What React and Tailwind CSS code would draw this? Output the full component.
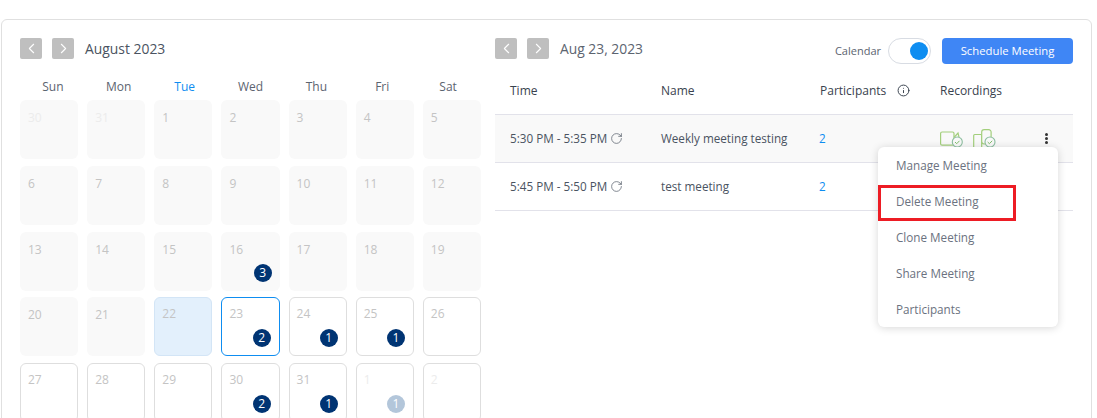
import { ChevronLeft, ChevronRight, Info, RotateCw } from "lucide-react";

const WEEK_DAYS = ["Sun", "Mon", "Tue", "Wed", "Thu", "Fri", "Sat"];

// kind: past = grey tile, today = blue tile, selected / open = outlined tile
const CELLS = [
  { day: 30, kind: "past", faded: true },
  { day: 31, kind: "past", faded: true },
  { day: 1, kind: "past" },
  { day: 2, kind: "past" },
  { day: 3, kind: "past" },
  { day: 4, kind: "past" },
  { day: 5, kind: "past" },
  { day: 6, kind: "past" },
  { day: 7, kind: "past" },
  { day: 8, kind: "past" },
  { day: 9, kind: "past" },
  { day: 10, kind: "past" },
  { day: 11, kind: "past" },
  { day: 12, kind: "past" },
  { day: 13, kind: "past" },
  { day: 14, kind: "past" },
  { day: 15, kind: "past" },
  { day: 16, kind: "past", count: 3 },
  { day: 17, kind: "past" },
  { day: 18, kind: "past" },
  { day: 19, kind: "past" },
  { day: 20, kind: "past" },
  { day: 21, kind: "past" },
  { day: 22, kind: "today" },
  { day: 23, kind: "selected", count: 2 },
  { day: 24, kind: "open", count: 1 },
  { day: 25, kind: "open", count: 1 },
  { day: 26, kind: "open" },
  { day: 27, kind: "open" },
  { day: 28, kind: "open" },
  { day: 29, kind: "open" },
  { day: 30, kind: "open", count: 2 },
  { day: 31, kind: "open", count: 1 },
  { day: 1, kind: "open", faded: true, count: 1 },
  { day: 2, kind: "open", faded: true },
];

const MEETINGS = [
  { time: "5:30 PM - 5:35 PM", name: "Weekly meeting testing", count: 2, active: true },
  { time: "5:45 PM - 5:50 PM", name: "test meeting", count: 2 },
];

const MENU_ITEMS = [
  "Manage Meeting",
  "Delete Meeting",
  "Clone Meeting",
  "Share Meeting",
  "Participants",
];

const NavButtons = () => (
  <div className="flex gap-[10px]">
    <button className="flex items-center justify-center w-[22px] h-[21px] rounded-[2px] bg-[#bfbfbf] text-white">
      <ChevronLeft size={17} strokeWidth={1.5} />
    </button>
    <button className="flex items-center justify-center w-[22px] h-[21px] rounded-[2px] bg-[#bfbfbf] text-white">
      <ChevronRight size={17} strokeWidth={1.5} />
    </button>
  </div>
);

const DayCell = ({ day, kind, faded, count }) => {
  const tile = {
    past: "bg-[#f9f9f9] pl-[8px] pt-[9px]",
    today: "bg-[#e3f0fc] border border-[#d3e5f6] pl-[7px] pt-[7px]",
    selected: "bg-white border border-[#0e8df1] pl-[7px] pt-[7px]",
    open: "bg-white border border-[#dedede] pl-[7px] pt-[7px]",
  }[kind];
  const badgeBottom = kind === "past" ? "bottom-[9px]" : "bottom-[8px]";

  return (
    <div className={`relative h-[59px] rounded-[6px] text-xs leading-[18px] ${tile} ${faded ? "text-[#ececec]" : "text-[#c4c4c4]"}`}>
      {day}
      {count && (
        <span className={`absolute right-[8px] ${badgeBottom} flex items-center justify-center w-[18px] h-[18px] rounded-full text-xs text-white ${faded ? "bg-[#b3c6da]" : "bg-[#003473]"}`}>
          {count}
        </span>
      )}
    </div>
  );
};

const CameraCheck = () => (
  <svg width="23" height="20" viewBox="0 0 23 20" fill="none">
    <rect x="0.6" y="3" width="13.4" height="13.2" rx="1.5" stroke="#a3cf7c" strokeWidth="1.2" />
    <path d="M14 8.5l4-4.5 1.2 5" stroke="#a3cf7c" strokeWidth="1.2" />
    <circle cx="17.3" cy="13" r="5" fill="#f9f9f9" stroke="#8dbfa0" strokeWidth="1.1" />
    <path d="M15 13l1.7 1.7 2.8-2.9" stroke="#7fbf6a" strokeWidth="1" />
  </svg>
);

const PhoneCheck = () => (
  <svg width="23" height="20" viewBox="0 0 23 20" fill="none">
    <rect x="0.7" y="5.5" width="8" height="14" rx="1" stroke="#a3cf7c" strokeWidth="1.2" />
    <path d="M8.7 3a2.4 2.4 0 012.4-2.4h4.6a2.4 2.4 0 012.4 2.4v7l-6 5H11a2.4 2.4 0 01-2.3-2.4z" fill="#f9f9f9" stroke="#a3cf7c" strokeWidth="1.2" />
    <circle cx="17" cy="13" r="5" fill="#f9f9f9" stroke="#8dbfa0" strokeWidth="1.1" />
    <path d="M14.7 13l1.7 1.7 2.8-2.9" stroke="#7fbf6a" strokeWidth="1" />
  </svg>
);

const App = () => {
  return (
    <div className="h-[418px] w-[1097px] overflow-hidden bg-white pt-[19px] pl-px font-['Open_Sans','Noto_Sans',sans-serif] text-[#3f4a59]">
      <div className="flex h-[420px] w-[1091px] rounded-t-[6px] border border-[#e0e0e0] pl-[18px] pt-[18px]">
        {/* calendar */}
        <section className="w-[461px]">
          <div className="flex items-center h-[21px] gap-[11px]">
            <NavButtons />
            <h2 className="pt-px text-[13.9px] text-[#4a5361]">August 2023</h2>
          </div>
          <div className="grid grid-cols-7 mt-[17px] h-[24px] text-xs leading-[22px] text-center text-[#5c6470]">
            {WEEK_DAYS.map((name) => (
              <div key={name} className={name === "Tue" ? "text-[#0e8df1]" : ""}>
                {name}
              </div>
            ))}
          </div>
          <div className="grid grid-cols-7 gap-x-[9px] gap-y-[6.75px]">
            {CELLS.map((cell, i) => (
              <DayCell key={i} {...cell} />
            ))}
          </div>
        </section>

        {/* meetings of the day */}
        <section className="relative ml-[14px] w-[578px]">
          <div className="flex items-start h-[21px]">
            <NavButtons />
            <h2 className="ml-[11px] h-[21px] leading-[22px] text-[13.85px] text-[#5c6470]">Aug 23, 2023</h2>
            <span className="ml-auto h-[26px] leading-[25px] text-[11px] text-[#5c6470]">Calendar</span>
            <div className="ml-[7px] flex items-center justify-end w-[43px] h-[26px] rounded-full border border-[#d8dce3] bg-white pr-[2px]">
              <span className="w-[18px] h-[18px] rounded-full bg-[#0e8df1]" />
            </div>
            <button className="ml-[11px] w-[131px] h-[26px] rounded-[4px] bg-[#3f86f5] text-[11.3px] text-white">
              Schedule Meeting
            </button>
          </div>

          <div className="flex items-center h-[55px] mt-px border-b border-[#e2e2ea] pt-[7px] text-xs font-medium text-[#39424e]">
            <div className="w-[166px] pl-[15px]">Time</div>
            <div className="w-[159px]">Name</div>
            <div className="flex items-center w-[120px]">
              Participants
              <Info size={13} strokeWidth={1.8} className="ml-[11px]" />
            </div>
            <div>Recordings</div>
          </div>

          {MEETINGS.map((meeting) => (
            <div
              key={meeting.time}
              className={`flex items-center h-[48px] border-b border-[#e2e2ea] text-[11.7px] text-[#4a5361] ${meeting.active ? "bg-[#f9f9f9]" : ""}`}
            >
              <div className="flex items-center w-[166px] pl-[15px]">
                {meeting.time}
                <RotateCw size={13} strokeWidth={1.4} className="ml-[3px] text-[#5c6470]" />
              </div>
              <div className="w-[159px]">{meeting.name}</div>
              <div className="w-[120px] -ml-px pr-px text-[#0e8df1]">{meeting.count}</div>
              {meeting.active && (
                <div className="flex items-center gap-[10px] ml-px">
                  <CameraCheck />
                  <PhoneCheck />
                  <span className="ml-[39px] flex flex-col gap-px">
                    <i className="block w-[3px] h-[3px] rounded-full bg-[#333]" />
                    <i className="block w-[3px] h-[3px] rounded-full bg-[#333]" />
                    <i className="block w-[3px] h-[3px] rounded-full bg-[#333]" />
                  </span>
                </div>
              )}
            </div>
          ))}

          {/* row menu */}
          <ul className="absolute left-[383px] top-[109px] w-[180px] rounded-[6px] bg-white shadow-[0_1px_8px_rgba(0,0,0,0.16)]">
            {MENU_ITEMS.map((item) => (
              <li key={item} className="flex items-center h-[36px] pl-[18px] pt-[2px] text-[11.7px] text-[#6b7280]">
                {item}
              </li>
            ))}
          </ul>
          <div className="absolute left-[383px] top-[147px] w-[138px] h-[36px] border-[3px] border-[#ed1c24]" />
        </section>
      </div>
    </div>
  );
};

export default App;
